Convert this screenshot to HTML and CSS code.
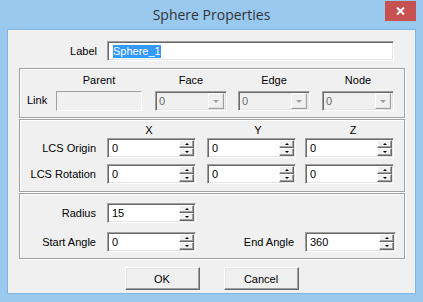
FILE: index.html
```html
<!DOCTYPE html>
<html lang="en">
<head>
  <meta charset="UTF-8" />
  <title>Sphere Properties</title>
  <link rel="stylesheet" href="styles.css">
</head>
<body>
  <div class="window">
    <div class="titlebar">
      <span class="title">Sphere Properties</span>
      <button class="close">
        <svg width="9" height="8" viewBox="0 0 9 8"><path d="M1 0.5L8 7.5M8 0.5L1 7.5" stroke="#fff" stroke-width="2"/></svg>
      </button>
    </div>

    <div class="client">
      <!-- name -->
      <div class="label-row">
        <span class="lbl">Label</span>
        <div class="field"><span class="sel">Sphere_1</span></div>
      </div>

      <!-- link -->
      <div class="group link-group">
        <div class="head-row">
          <span class="head parent-col">Parent</span>
          <span class="head combo-col">Face</span>
          <span class="head combo-col">Edge</span>
          <span class="head combo-col">Node</span>
        </div>
        <div class="link-row">
          <span class="link-lbl">Link</span>
          <div class="field disabled parent-box"></div>
          <div class="combo"><span class="val">0</span><span class="drop"></span></div>
          <div class="combo"><span class="val">0</span><span class="drop"></span></div>
          <div class="combo"><span class="val">0</span><span class="drop"></span></div>
        </div>
      </div>

      <!-- lcs -->
      <div class="group lcs-group">
        <div class="row heads">
          <span></span>
          <span class="axis hx">X</span>
          <span class="axis hy">Y</span>
          <span class="axis hz">Z</span>
        </div>
        <div class="row">
          <span class="lbl">LCS Origin</span>
          <div class="spin"><span class="val">0</span><span class="arrows"><i class="up"></i><i class="dn"></i></span></div>
          <div class="spin"><span class="val">0</span><span class="arrows"><i class="up"></i><i class="dn"></i></span></div>
          <div class="spin"><span class="val">0</span><span class="arrows"><i class="up"></i><i class="dn"></i></span></div>
        </div>
        <div class="row">
          <span class="lbl">LCS Rotation</span>
          <div class="spin"><span class="val">0</span><span class="arrows"><i class="up"></i><i class="dn"></i></span></div>
          <div class="spin"><span class="val">0</span><span class="arrows"><i class="up"></i><i class="dn"></i></span></div>
          <div class="spin"><span class="val">0</span><span class="arrows"><i class="up"></i><i class="dn"></i></span></div>
        </div>
      </div>

      <!-- sphere -->
      <div class="group shape-group">
        <div class="row">
          <span class="lbl">Radius</span>
          <div class="spin"><span class="val">15</span><span class="arrows"><i class="up"></i><i class="dn"></i></span></div>
        </div>
        <div class="row">
          <span class="lbl">Start Angle</span>
          <div class="spin"><span class="val">0</span><span class="arrows"><i class="up"></i><i class="dn"></i></span></div>
          <span class="lbl end-lbl">End Angle</span>
          <div class="spin wide-spin"><span class="val">360</span><span class="arrows"><i class="up"></i><i class="dn"></i></span></div>
        </div>
      </div>

      <div class="buttons">
        <button class="btn">OK</button>
        <button class="btn">Cancel</button>
      </div>
    </div>
  </div>
</body>
</html>
```

FILE: styles.css
```css
/* ── RESET & BASE ───────────────────────────────────────── */
* { margin: 0; padding: 0; box-sizing: border-box; }
body {
  width: 423px;
  height: 302px;
  overflow: hidden;
  font-family: "Liberation Sans", Arial, sans-serif;
  font-size: 11px;
  color: #000;
}
button { font: inherit; color: inherit; }

/* ── WINDOW FRAME ──────────────────────────────────────── */
.window {
  width: 423px;
  height: 302px;
  background: #99c9ef;
  display: flex;
  flex-direction: column;
}
.titlebar {
  height: 29px;
  display: grid;
  grid-template-columns: 1fr auto 1fr;
}
.title {
  grid-column: 2;
  font-family: "Open Sans", "Liberation Sans", sans-serif;
  font-size: 14px;
  line-height: 30px;
  color: #333;
}
.close {
  grid-column: 3;
  justify-self: end;
  margin: 1px 7px 0 0;
  width: 31px;
  height: 20px;
  border: none;
  background: #c75050;
  display: flex;
  align-items: center;
  justify-content: center;
}
.client {
  flex: 1;
  margin: 0 7px 8px;
  border: 1px solid #83b4e0;
  background: #f0f0f0;
  padding-top: 11px;
}

/* ── SUNKEN FIELDS ─────────────────────────────────────── */
.field, .spin, .combo {
  height: 20px;
  border: 1px solid;
  border-color: #a0a0a0 #fff #fff #a0a0a0;
  box-shadow: inset 1px 1px 0 #696969, inset -1px -1px 0 #e3e3e3;
  background: #fff;
  display: flex;
  align-items: center;
}
.field { padding-left: 5px; }
.sel {
  background: #3399ff;
  color: #fff;
  line-height: 13px;
}
.field.disabled { background: #f0f0f0; }
.val { flex: 1; padding-left: 4px; line-height: 16px; }

/* ── LABEL ROW ─────────────────────────────────────────── */
.label-row {
  display: grid;
  grid-template-columns: 99px 287px;
  align-items: center;
}
.label-row .lbl { text-align: right; padding-right: 10px; }

/* ── GROUP BOXES ───────────────────────────────────────── */
.group {
  margin: 1px 10px 0 11px;
  border: 1px solid #a0a0a0;
  box-shadow: inset 1px 1px 0 #fff, 1px 1px 0 #fff;
}
.link-group {
  margin-top: 7px;
  height: 50px;
  padding-top: 5px;
}
.head-row, .link-row {
  display: grid;
  grid-template-columns: 36px 99px 83px 84px 72px;
  align-items: center;
}
.head-row { height: 13px; margin-bottom: 4px; }
.link-row { height: 20px; }
.head { text-align: center; line-height: 13px; }
.parent-col { grid-column: 2; width: 86px; }
.combo-col { width: 72px; }
.link-lbl { padding-left: 7px; padding-bottom: 2px; }
.parent-box { width: 86px; box-shadow: none; border-color: #a0a0a0 #fff #fff #a0a0a0; }
.combo { width: 72px; background: #f0f0f0; padding-right: 2px; }
.combo .val { color: #6d6d6d; padding-left: 3px; }
.drop {
  width: 16px;
  height: 16px;
  border: 1px solid;
  border-color: #fff #a0a0a0 #a0a0a0 #fff;
  box-shadow: inset -1px -1px 0 #e3e3e3;
  display: flex;
  align-items: center;
  justify-content: center;
}
.drop::after {
  content: "";
  border-left: 3px solid transparent;
  border-right: 3px solid transparent;
  border-top: 3px solid #a0a0a0;
}

/* ── ROWS ──────────────────────────────────────────────── */
.row {
  display: grid;
  grid-template-columns: 87px 100px 98px 89px;
  align-items: center;
  height: 20px;
}
.row .lbl { text-align: right; padding-right: 11px; }
.lcs-group { height: 73px; padding-top: 4px; }
.lcs-group .row + .row { margin-top: 6px; }
.lcs-group .heads + .row { margin-top: 0; }
.heads { height: 14px; align-items: start; }
.axis { width: 89px; text-align: center; line-height: 13px; }
.hx { padding-right: 5px; }
.hy { padding-left: 13px; }
.hz { padding-left: 7px; }

.shape-group { height: 66px; padding-top: 9px; }
.shape-group .row { grid-template-columns: 87px 89px 109px 91px; }
.shape-group .row + .row { margin-top: 9px; }
.end-lbl { padding-right: 9px; }

/* ── SPIN BOXES ────────────────────────────────────────── */
.spin { width: 89px; padding-right: 1px; }
.wide-spin { width: 91px; }
.arrows {
  width: 15px;
  height: 16px;
  display: flex;
  flex-direction: column;
}
.arrows i {
  flex: 1;
  background: #f0f0f0;
  border: 1px solid;
  border-color: #fff #696969 #696969 #fff;
  box-shadow: inset -1px -1px 0 #a0a0a0;
  display: flex;
  align-items: center;
  justify-content: center;
}
.arrows i::after {
  content: "";
  border-left: 2px solid transparent;
  border-right: 2px solid transparent;
}
.up::after { border-bottom: 2px solid #000; }
.dn::after { border-top: 2px solid #000; }

/* ── BUTTONS ───────────────────────────────────────────── */
.buttons {
  display: flex;
  justify-content: center;
  gap: 24px;
  margin-top: 8px;
}
.btn {
  width: 75px;
  height: 23px;
  background: #f0f0f0;
  border: 1px solid;
  border-color: #fff #696969 #696969 #fff;
  box-shadow: inset -1px -1px 0 #a0a0a0, inset 1px 1px 0 #e3e3e3;
}
```
